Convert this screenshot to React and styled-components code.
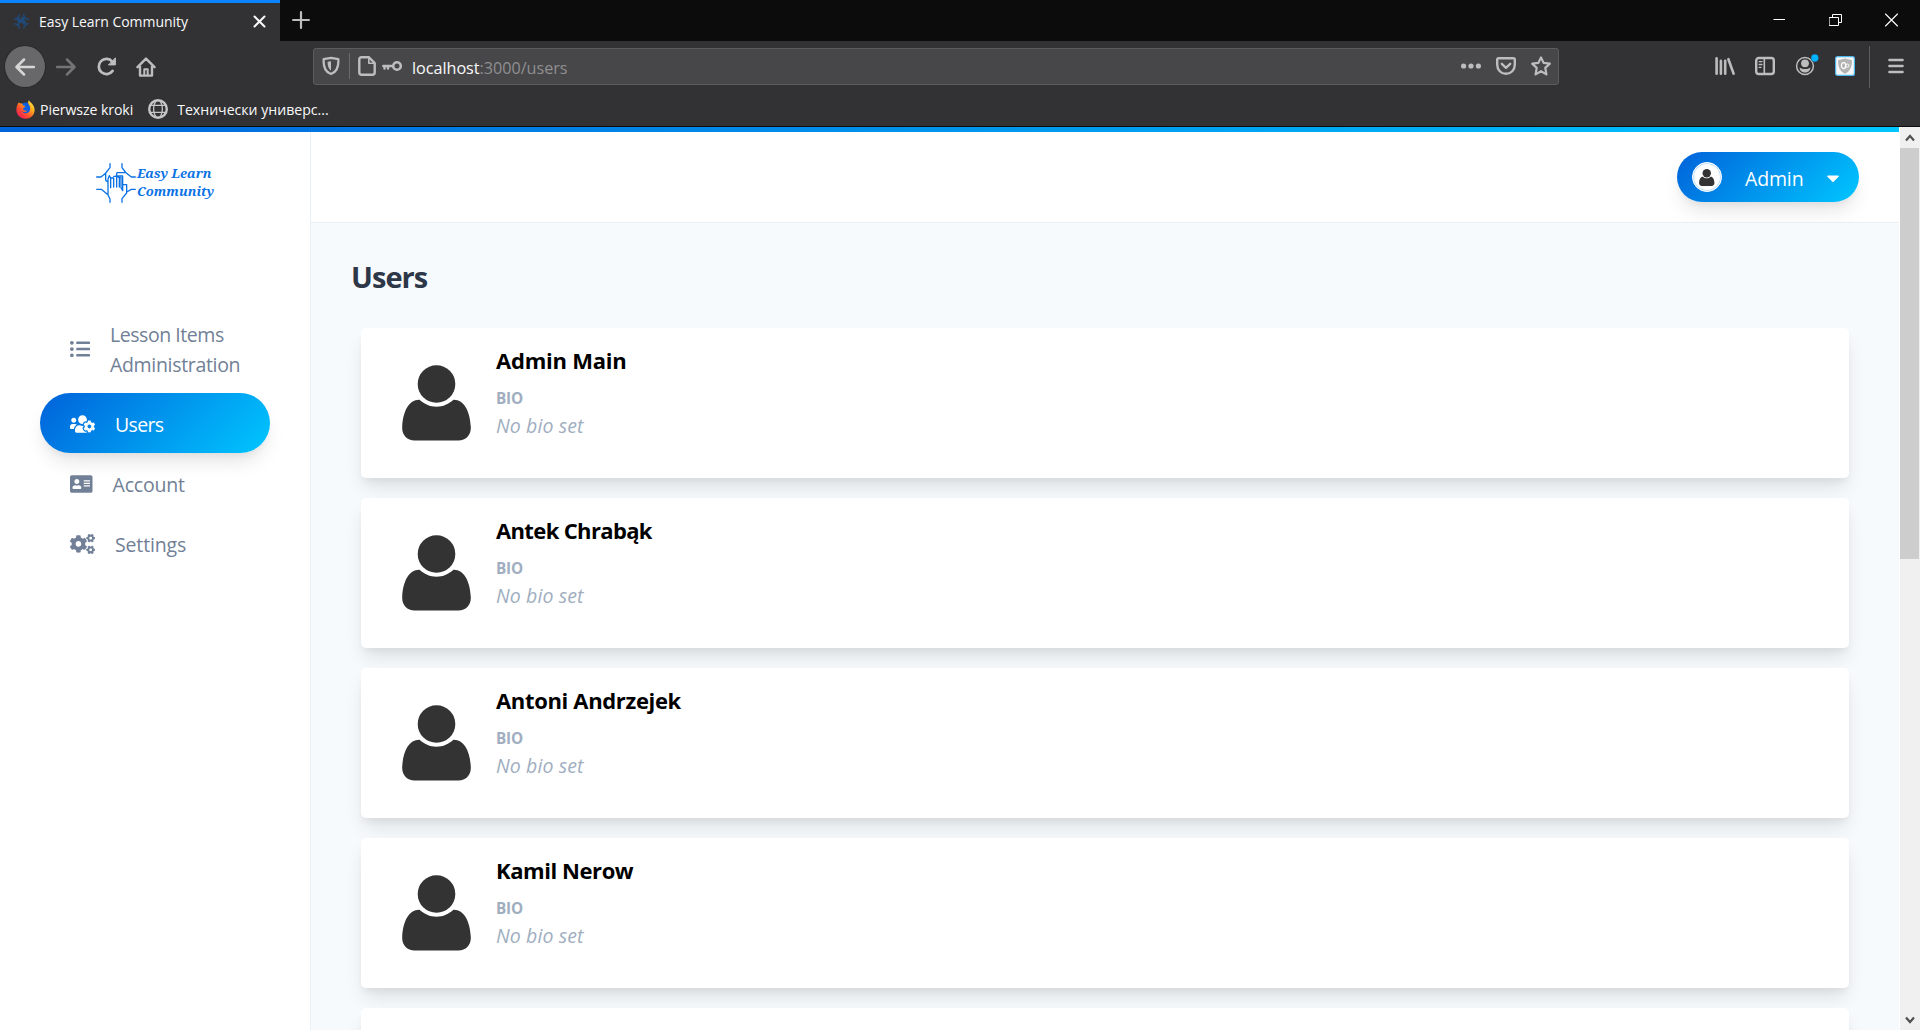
import React from 'react';
import styled, { createGlobalStyle } from 'styled-components';
import { FaListUl, FaUsersCog, FaAddressCard, FaCogs, FaCaretDown } from 'react-icons/fa';

const Global = createGlobalStyle`
  *, *::before, *::after { box-sizing: border-box; }
  html, body { margin: 0; height: 1030px; overflow: hidden; background: #fff; }
  body { font-family: "Open Sans", "Noto Sans", sans-serif; }
  svg { display: block; flex: none; }
`;

const Window = styled.div`
  display: flex;
  flex-direction: column;
  width: 1920px;
  height: 1030px;
  overflow: hidden;
`;

/* ---------- browser chrome ---------- */

const TabStrip = styled.div`
  display: flex;
  height: 41px;
  flex: none;
  background: #0c0c0c;
`;

const Tab = styled.div`
  display: flex;
  align-items: center;
  width: 280px;
  padding: 0 14px 2px 14px;
  border-top: 3px solid #0a84ff;
  background: #323234;
  color: #f9f9fa;
  font-size: 14px;
`;

const TabTitle = styled.span`
  flex: 1;
  margin-left: 10px;
  letter-spacing: -0.03px;
  white-space: nowrap;
`;

const NewTab = styled.div`
  display: flex;
  padding: 11px 0 0 12px;
`;

const WindowControls = styled.div`
  display: flex;
  gap: 43px;
  margin-left: auto;
  padding: 13px 22px 0 0;
`;

const NavBar = styled.div`
  display: flex;
  align-items: center;
  flex: none;
  height: 50px;
  padding: 1px 16px 0 5px;
  background: #323234;
  color: #bdbdbe;
`;

const BackButton = styled.div`
  display: grid;
  place-items: center;
  width: 40px;
  height: 41px;
  border-radius: 50%;
  background: #68686a;
  box-shadow: 0 0 0 1px #2a2a2b;
  color: #d6d6d7;
`;

const NavIcons = styled.div`
  display: flex;
  gap: 20px;
  margin-left: 11px;
`;

const UrlBar = styled.div`
  display: flex;
  align-items: center;
  width: 1246px;
  height: 37px;
  margin-left: 157px;
  padding: 0 7px 1px 8px;
  border: 1px solid #5c5c5e;
  border-radius: 3px;
  background: #474749;
`;

const UrlDivider = styled.div`
  width: 1px;
  height: 26px;
  margin: 0 8px 0 9px;
  background: #69696b;
`;

const KeyIcon = styled.span`
  margin-left: 6px;
`;

const Url = styled.div`
  flex: 1;
  margin-left: 10px;
  padding-top: 3px;
  color: #8f8f91;
  font-size: 16.2px;
  letter-spacing: -0.03px;
  line-height: 24px;
  white-space: nowrap;
`;

const Host = styled.span`
  color: #f9f9fa;
`;

const PageActions = styled.div`
  display: flex;
  align-items: center;
  gap: 15px;
`;

const ToolButtons = styled.div`
  display: flex;
  align-items: center;
  gap: 20px;
  margin-left: auto;
  padding-bottom: 1px;
`;

const ToolDivider = styled.div`
  width: 1px;
  height: 42px;
  margin: 0 18px 0 14px;
  background: #5c5c5e;
`;

const MenuButton = styled.span`
  padding-bottom: 1px;
`;

const Bookmarks = styled.div`
  display: flex;
  flex: none;
  align-items: center;
  height: 36px;
  padding: 1px 0 0 16px;
  border-bottom: 1px solid #0c0c0c;
  background: #323234;
  color: #f9f9fa;
  font-size: 14.1px;
`;

const Bookmark = styled.div`
  display: flex;
  align-items: center;
  gap: ${(p) => p.$gap}px;
  margin-right: 15px;
  letter-spacing: ${(p) => p.$track || 0}px;
  white-space: nowrap;
`;

/* ---------- page ---------- */

const Viewport = styled.div`
  display: flex;
  flex: 1;
  min-height: 0;
`;

const Page = styled.div`
  display: flex;
  flex-direction: column;
  width: 1899px;
  min-height: 0;
`;

const Accent = styled.div`
  flex: none;
  height: 5px;
  background: linear-gradient(90deg, #0064da, #00c6ff);
`;

const Columns = styled.div`
  display: flex;
  flex: 1;
  min-height: 0;
`;

const Sidebar = styled.aside`
  width: 311px;
  flex: none;
  padding: 31px 40px 0;
  border-right: 1px solid #e8eff5;
  background: #fff;
`;

const Logo = styled.div`
  display: flex;
  align-items: flex-start;
  gap: 1px;
  height: 140px;
  padding-left: 56px;
  color: #0a72e4;
`;

const LogoText = styled.div`
  padding-top: 1px;
  font: italic 700 13px/18px "Noto Serif", "DejaVu Serif", serif;
`;

const gradient = 'linear-gradient(135deg, #0062da, #00c6ff)';
const pillShadow = '0 12.5px 18.75px -3.75px rgba(0,0,0,.1), 0 5px 7.5px -2.5px rgba(0,0,0,.05)';

const NavItem = styled.a`
  display: flex;
  align-items: center;
  gap: 20px;
  height: ${(p) => (p.$tall ? 90 : 60)}px;
  padding: 2px 0 0 30px;
  border-radius: 30px;
  background: ${(p) => (p.$active ? gradient : 'transparent')};
  box-shadow: ${(p) => (p.$active ? pillShadow : 'none')};
  color: ${(p) => (p.$active ? '#fff' : '#718096')};
  font-size: 19.5px;
  line-height: 30px;
`;

const NavIconBox = styled.span`
  svg { width: ${(p) => p.$w}px; height: 20px; }
`;

const NavLabel = styled.span`
  padding-top: 2px;
  letter-spacing: ${(p) => p.$track}px;
`;

const NavLine = styled.span`
  display: block;
  letter-spacing: ${(p) => p.$track}px;
`;

const Main = styled.div`
  display: flex;
  flex: 1;
  flex-direction: column;
  min-height: 0;
`;

const TopBar = styled.header`
  display: flex;
  flex: none;
  justify-content: flex-end;
  height: 91px;
  padding: 20px 40px 0;
  border-bottom: 1px solid #e8eff5;
  background: #fff;
`;

const UserMenu = styled.button`
  display: flex;
  align-items: center;
  width: 182px;
  height: 50px;
  padding: 0 16px 0 15px;
  border: 0;
  border-radius: 25px;
  background: ${gradient};
  box-shadow: ${pillShadow};
  color: #fff;
  font: 400 19.5px/30px "Open Sans", "Noto Sans", sans-serif;
`;

const SmallAvatar = styled.span`
  display: grid;
  place-items: center;
  width: 30px;
  height: 30px;
  border: 1px solid #fff;
  border-radius: 50%;
  background: #fff;
  box-shadow: inset 0 0 0 1px #b9dbf9;
`;

const UserName = styled.span`
  flex: 1;
  padding-top: 3px;
  margin-left: 23px;
  letter-spacing: -0.15px;
  text-align: left;
`;

const Caret = styled.span`
  padding-top: 1px;
`;

const Content = styled.main`
  flex: 1;
  min-height: 0;
  padding: 33px 50px 0;
  overflow: hidden;
  background: #f6fafd;
`;

const Title = styled.h1`
  margin: 0 0 30px -10px;
  color: #2d3748;
  font-size: 29px;
  font-weight: 700;
  letter-spacing: -0.95px;
  line-height: 42px;
`;

const List = styled.div`
  display: grid;
  gap: 20px;
`;

const Card = styled.article`
  display: flex;
  gap: 10px;
  height: 150px;
  padding: 15px 25px;
  border-radius: 5px;
  background: #fff;
  box-shadow: 0 12.5px 18.75px -3.75px rgba(0,0,0,.1), 0 5px 7.5px -2.5px rgba(0,0,0,.05);
`;

const AvatarBox = styled.div`
  display: grid;
  place-items: center;
  width: 100px;
  height: 120px;
`;

const Name = styled.h2`
  margin: 0;
  color: #000;
  font-size: 22px;
  font-weight: 700;
  letter-spacing: ${(p) => p.$track}px;
  line-height: 35px;
`;

const Label = styled.div`
  margin-top: 9px;
  color: #a0aec0;
  font-size: 15.3px;
  font-weight: 700;
  letter-spacing: -0.2px;
  line-height: 22px;
`;

const Bio = styled.p`
  margin: 1px 0 0;
  color: #a0aec0;
  font-size: 19.5px;
  font-style: italic;
  letter-spacing: 0.1px;
  line-height: 31px;
`;

const Scrollbar = styled.div`
  display: flex;
  flex-direction: column;
  align-items: center;
  width: 21px;
  border-left: 1px solid #fff;
  background: #f0f0f0;
`;

const ScrollArrow = styled.div`
  display: grid;
  place-items: center;
  width: 100%;
  height: 21px;
`;

const ScrollTrack = styled.div`
  width: 100%;
  flex: 1;
  padding-right: 1px;
`;

const ScrollThumb = styled.div`
  height: 411px;
  background: #cdcdcd;
`;

/* ---------- drawings ---------- */

const Line = ({ w = 20, h = 20, sw = 2.5, vb, children, ...rest }) => (
  <svg width={w} height={h} viewBox={vb || `0 0 ${w} ${h}`} fill="none" stroke="currentColor"
    strokeWidth={sw} strokeLinecap="round" strokeLinejoin="round" {...rest}>{children}</svg>
);

const HANDS = 'M328 100V112L315 128V150L322 156M288 140H301L315 129M364 100V112L374 125M404 140H392L374 126L349 127L347 137H366V181M288 177H302L319 191M322 146V194L328 206V216M404 177H392L378 185M364 216V205L378 188V163H368M322 146L326 136L330 143V172M330 143H339V170M339 138H348V170M348 138L356 142V170M356 142H361V172L366 181';

const Hands = ({ w, h, sw }) => (
  <Line w={w} h={h} vb="286 98 120 120" sw={sw}><path d={HANDS} /></Line>
);

const Person = ({ w, h }) => (
  <svg width={w} height={h} viewBox="0 0 69 76" fill="#333">
    <circle cx="34.5" cy="19" r="18.8" />
    <path d="M17.5 34.8C22 39 28 41.8 34.5 41.8S47 39 51.5 34.8C62 34.5 68 46 68.8 62C69.2 70 64 75.6 56.5 75.6H12.5C5 75.6-.2 70 .2 62C1 46 7 34.5 17.5 34.8Z" />
  </svg>
);

const FirefoxLogo = () => (
  <svg width="19" height="19" viewBox="0 0 19 19">
    <defs>
      <linearGradient id="fx" x1="1" y1="0" x2="0.1" y2="1">
        <stop offset="0" stopColor="#fff24a" /><stop offset=".35" stopColor="#ffb01f" />
        <stop offset=".65" stopColor="#ff4f2b" /><stop offset="1" stopColor="#f0106a" />
      </linearGradient>
    </defs>
    <circle cx="9.8" cy="9" r="6.5" fill="#0b5fe0" />
    <path d="M2.5 2.5C4 3.2 5 3.6 6.5 3.6C6.2 5 7.2 5.8 9.4 6C9 7.4 7.5 7.6 7 8.8C7.2 10.4 9 11 11.3 10.4C10 12.6 6.6 12.6 5.6 10.5C6.5 14.5 14 14.5 14.2 8.5C14.2 5.5 12.5 4.8 12 2.6C12 1.5 12.4.8 13 .2C13.8 2.4 18.6 4.4 18.6 10C18.6 15 14.6 18.8 9.6 18.8C4.6 18.8.4 15 .4 10C.4 7 1.2 4.6 2.5 2.5Z" fill="url(#fx)" />
  </svg>
);

const Chrome = () => (
  <>
    <TabStrip>
      <Tab>
        <svg width="15" height="15" viewBox="286 98 120 120" fill="none" stroke="#1f4a78" strokeWidth="11"><path d={HANDS} /></svg>
        <TabTitle>Easy Learn Community</TabTitle>
        <Line w={13} h={13} sw={2} color="#f9f9fa"><path d="M1.5 1.5L11.5 11.5M11.5 1.5L1.5 11.5" /></Line>
      </Tab>
      <NewTab><Line w={18} h={18} sw={2.2} color="#bdbdbe"><path d="M9 1.1V16.9M1.1 9H16.9" /></Line></NewTab>
      <WindowControls>
        <Line w={13} h={13} sw={1} color="#fff"><path d="M.5 6.5H12" strokeLinecap="butt" /></Line>
        <Line w={13} h={13} sw={1} color="#fff"><path d="M.5 4.5H9.5V12.5H.5ZM3.5 4.5V1.5H12.5V9.5H9.5" /></Line>
        <Line w={13} h={14} sw={1.1} color="#fff"><path d="M.5 1L12.5 13M12.5 1L.5 13" /></Line>
      </WindowControls>
    </TabStrip>
    <NavBar>
      <BackButton><Line><path d="M19 10H2M9 2.5L1.5 10L9 17.5" /></Line></BackButton>
      <NavIcons>
        <Line color="#747476"><path d="M1 10H18M11 2.5L18.5 10L11 17.5" /></Line>
        <Line sw={2.7} vb="-0.8 0.3 20 20"><path d="M15.8 14.2A7.6 7.6 0 1 1 15.4 4.9" /><path d="M18.6 1.5V8.2H12Z" fill="currentColor" strokeWidth="1" /></Line>
        <Line sw={2.4}><path d="M1.5 10.2L10 1.6L18.5 10.2M4 9V18.6H16V9" /><path d="M8.3 18V12.3H11.7V18" strokeWidth="2" /></Line>
      </NavIcons>
      <UrlBar>
        <Line w={18} h={20} sw={2.3}><path d="M9 1.8L16.3 3.2C16.8 10.5 14.2 16.3 9 18C3.8 16.3 1.2 10.5 1.7 3.2Z" /><path d="M9 5.2V14.4C6.5 13 5.4 9.5 5.6 5.8Z" fill="currentColor" stroke="none" /></Line>
        <UrlDivider />
        <Line w={18} h={20} sw={2.4}><path d="M3.5 1.3H11L16.7 7V16.5Q16.7 18.7 14.5 18.7H3.5Q1.3 18.7 1.3 16.5V3.5Q1.3 1.3 3.5 1.3Z" /><path d="M10.8 2V7.2H16" strokeWidth="1.6" /></Line>
        <KeyIcon><Line w={20} h={20} sw={2.6}><circle cx="15" cy="10" r="3.8" /><path d="M11 10H1.3M2.5 10V12.6M6 10V12.6" strokeWidth="2.4" /></Line></KeyIcon>
        <Url><Host>localhost</Host>:3000/users</Url>
        <PageActions>
          <svg width="20" height="20" fill="currentColor"><circle cx="2.6" cy="10" r="2.6" /><circle cx="10" cy="10" r="2.6" /><circle cx="17.4" cy="10" r="2.6" /></svg>
          <Line sw={2.4}><path d="M2.6 2.2H17.4Q18.8 2.2 18.8 3.6V8.5C18.8 14 15 17.8 10 17.8S1.2 14 1.2 8.5V3.6Q1.2 2.2 2.6 2.2Z" /><path d="M5.8 7.8L10 11.8L14.2 7.8" /></Line>
          <Line sw={2.2}><path d="M10 1.4L12.6 6.9L18.8 7.7L14.3 11.9L15.4 18.4L10 15.2L4.6 18.4L5.7 11.9L1.2 7.7L7.4 6.9Z" /></Line>
        </PageActions>
      </UrlBar>
      <ToolButtons>
        <Line sw={2.6}><path d="M1.6 2.3V17.7M5.9 4.8V17.7M10.2 4.8V17.7" /><path d="M13.4 3.2L18.6 17.6" /></Line>
        <Line sw={2.4}><rect x="1.2" y="2" width="17.6" height="16" rx="2.5" /><path d="M9.3 2V18" strokeWidth="1.6" /><path d="M4.2 5.6H7M4.2 8.5H7M4.2 11.4H6" strokeWidth="1.4" /></Line>
        <svg width="20" height="24" viewBox="0 0 20 24" overflow="visible">
          <circle cx="10" cy="12" r="8.4" fill="none" stroke="currentColor" strokeWidth="1.5" />
          <circle cx="10" cy="9.3" r="3.9" fill="currentColor" />
          <path d="M4.6 13.4C6.4 14.6 8 15.1 10 15.1S13.6 14.6 15.4 13.4C15.4 16.4 13 18.4 10 18.4S4.6 16.4 4.6 13.4Z" fill="currentColor" />
          <circle cx="19.8" cy="4" r="4" fill="#205c7e" /><circle cx="19.8" cy="4" r="3.4" fill="#00b3ff" />
        </svg>
        <svg width="20" height="20" viewBox="0 0 20 20">
          <rect x=".6" y=".6" width="18.8" height="18.8" rx="2" fill="#f7f7f7" stroke="#4fb8ee" strokeWidth="1.2" />
          <path d="M10 2.4L17 4.3C17 11 15 15.6 10 17.8C5 15.6 3 11 3 4.3Z" fill="#b4b4b4" />
          <ellipse cx="8.6" cy="9.6" rx="2.2" ry="3" fill="none" stroke="#fff" strokeWidth="1.2" />
          <circle cx="12.4" cy="9.6" r="1.6" fill="none" stroke="#fff" strokeWidth="1" />
        </svg>
      </ToolButtons>
      <ToolDivider />
      <MenuButton><Line w={16} h={20} sw={2.4}><path d="M1.4 4H14.6M1.4 10H14.6M1.4 16H14.6" /></Line></MenuButton>
    </NavBar>
    <Bookmarks>
      <Bookmark $gap={5} $track={-0.07}><FirefoxLogo />Pierwsze kroki</Bookmark>
      <Bookmark $gap={9}>
        <Line sw={2} color="#c4c4c5"><circle cx="10" cy="10" r="8.8" strokeWidth="2.4" /><ellipse cx="10" cy="10" rx="4.4" ry="8.6" strokeWidth="1.3" /><path d="M2.5 6.4H17.5M2.5 13.4H17.5" strokeWidth="1.3" /></Line>
        Технически универс...
      </Bookmark>
    </Bookmarks>
  </>
);

const NAV = [
  {
    id: 'lessons', Icon: FaListUl, w: 20, tall: true, track: 0,
    label: <><NavLine $track={-0.45}>Lesson Items</NavLine><NavLine $track={-0.32}>Administration</NavLine></>,
  },
  { id: 'users', Icon: FaUsersCog, w: 25, label: 'Users', track: -0.65, active: true },
  { id: 'account', Icon: FaAddressCard, w: 22.5, label: 'Account', track: -0.19 },
  { id: 'settings', Icon: FaCogs, w: 25, label: 'Settings', track: -0.14 },
];

const USERS = [
  ['Admin Main', -0.23],
  ['Antek Chrabąk', -0.64],
  ['Antoni Andrzejek', -0.34],
  ['Kamil Nerow', -0.43],
];

export default function App() {
  return (
    <Window>
      <Global />
      <Chrome />
      <Viewport>
        <Page>
          <Accent />
          <Columns>
            <Sidebar>
              <Logo>
                <Hands w={40} h={40} sw={3.9} />
                <LogoText>Easy Learn<br />Community</LogoText>
              </Logo>
              <nav>
                {NAV.map(({ id, Icon, w, label, track, active, tall }) => (
                  <NavItem key={id} $active={active} $tall={tall}>
                    <NavIconBox $w={w}><Icon /></NavIconBox>
                    <NavLabel $track={track}>{label}</NavLabel>
                  </NavItem>
                ))}
              </nav>
            </Sidebar>
            <Main>
              <TopBar>
                <UserMenu>
                  <SmallAvatar><Person w={15.5} h={17} /></SmallAvatar>
                  <UserName>Admin</UserName>
                  <Caret><FaCaretDown size={20} /></Caret>
                </UserMenu>
              </TopBar>
              <Content>
                <Title>Users</Title>
                <List>
                  {USERS.map(([name, track]) => (
                    <Card key={name}>
                      <AvatarBox><Person w={69} h={76} /></AvatarBox>
                      <div>
                        <Name $track={track}>{name}</Name>
                        <Label>BIO</Label>
                        <Bio>No bio set</Bio>
                      </div>
                    </Card>
                  ))}
                  <Card />
                </List>
              </Content>
            </Main>
          </Columns>
        </Page>
        <Scrollbar>
          <ScrollArrow><Line w={10} h={8} sw={2.2} color="#505050"><path d="M1 6.5L5 2L9 6.5" strokeLinecap="butt" strokeLinejoin="miter" /></Line></ScrollArrow>
          <ScrollTrack><ScrollThumb /></ScrollTrack>
          <ScrollArrow><Line w={10} h={8} sw={2.2} color="#505050"><path d="M1 1.5L5 6L9 1.5" strokeLinecap="butt" strokeLinejoin="miter" /></Line></ScrollArrow>
        </Scrollbar>
      </Viewport>
    </Window>
  );
}
